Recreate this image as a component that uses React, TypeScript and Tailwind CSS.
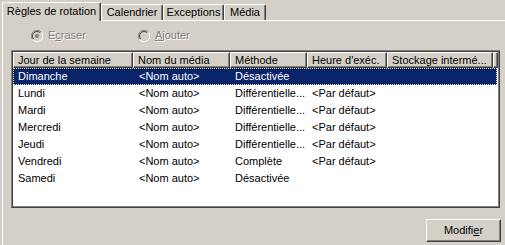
import React from "react";

const rows = [
  ["Dimanche", "<Nom auto>", "Désactivée", ""],
  ["Lundi", "<Nom auto>", "Différentielle...", "<Par défaut>"],
  ["Mardi", "<Nom auto>", "Différentielle...", "<Par défaut>"],
  ["Mercredi", "<Nom auto>", "Différentielle...", "<Par défaut>"],
  ["Jeudi", "<Nom auto>", "Différentielle...", "<Par défaut>"],
  ["Vendredi", "<Nom auto>", "Complète", "<Par défaut>"],
  ["Samedi", "<Nom auto>", "Désactivée", ""],
];

function Radio({ checked }: { checked: boolean }) {
  return (
    <svg width="12" height="12" viewBox="0 0 12 12" className="block">
      <path d="M10.5 2.5 A5.5 5.5 0 0 0 1.5 9.5" fill="none" stroke="#808080" strokeWidth="1" />
      <path d="M1.5 9.5 A5.5 5.5 0 0 0 10.5 2.5" fill="none" stroke="#ffffff" strokeWidth="1" />
      <circle cx="6" cy="6" r="4.5" fill="#d4d0c8" />
      <path d="M9.2 2.8 A4.5 4.5 0 0 0 2.8 9.2" fill="none" stroke="#404040" strokeWidth="1" />
      <path d="M2.8 9.2 A4.5 4.5 0 0 0 9.2 2.8" fill="none" stroke="#d4d0c8" strokeWidth="1" />
      {checked && <circle cx="6" cy="6" r="2" fill="#808080" />}
    </svg>
  );
}

function Tab({ label, w, selected }: { label: string; w: string; selected?: boolean }) {
  return (
    <div
      className={
        selected
          ? "h-[19px] -mb-[1px] relative z-10 bg-[#d4d0c8] border-l border-t border-white border-r border-r-[#404040] shadow-[inset_-1px_0_#808080] rounded-tl-[2px] rounded-tr-[2px] flex items-center justify-center pb-[2px] " + w
          : "h-[16px] bg-[#d4d0c8] border-l border-t border-white border-r border-r-[#404040] shadow-[inset_-1px_0_#808080] rounded-tl-[2px] rounded-tr-[2px] flex items-center justify-center " + w
      }
    >
      <span className="leading-none">{label}</span>
    </div>
  );
}

export default function App() {
  const widths = ["w-[120px]", "w-[97px]", "w-[77px]", "w-[80px]", "w-[106px]"];
  const headers = ["Jour de la semaine", "Nom du média", "Méthode", "Heure d'exéc.", "Stockage intermé..."];
  return (
    <div
      className="w-[505px] h-[245px] bg-[#d4d0c8] overflow-hidden flex flex-col text-[11px] text-black"
      style={{ fontFamily: '"Liberation Sans", Arial, sans-serif' }}
    >
      <div className="h-[20px] flex items-end pl-[2px]">
        <Tab label="Règles de rotation" w="w-[99px]" selected />
        <Tab label="Calendrier" w="w-[62px]" />
        <Tab label="Exceptions" w="w-[61px]" />
        <Tab label="Média" w="w-[42px]" />
      </div>
      <div className="flex-1 ml-[2px] border-t border-l border-white flex flex-col">
        <div className="h-[29px] flex items-center text-[#808080] [text-shadow:1px_1px_0_#ffffff]">
          <div className="ml-[28px] flex items-center">
            <Radio checked />
            <span className="ml-[5px]">
              E<span className="underline">c</span>raser
            </span>
          </div>
          <div className="ml-[52px] flex items-center">
            <Radio checked={false} />
            <span className="ml-[5px]">
              <span className="underline">A</span>jouter
            </span>
          </div>
        </div>
        <div className="ml-[8px] w-[489px] h-[158px] border border-[#808080] border-b-[#404040] border-r-[#404040]">
          <div className="w-full h-full border border-[#404040] border-b-[#808080] border-r-[#808080] bg-white flex flex-col">
            <div className="h-[16px] flex shrink-0">
              {headers.map((h, i) => (
                <div
                  key={i}
                  className={
                    "h-[16px] bg-[#d4d0c8] border-t border-l border-white border-r border-b border-r-[#404040] border-b-[#404040] shadow-[inset_-1px_-1px_#808080] pl-[4px] flex items-center whitespace-nowrap overflow-hidden " +
                    widths[i]
                  }
                >
                  {h}
                </div>
              ))}
              <div className="flex-1 h-[16px] bg-[#d4d0c8] border-t border-l border-white border-r border-b border-r-[#404040] border-b-[#404040] shadow-[inset_-1px_-1px_#808080]" />
            </div>
            {rows.map((r, ri) => (
              <div
                key={ri}
                className={
                  ri === 0
                    ? "h-[17px] flex items-center bg-[#0a246a] text-white border border-dotted border-[#e6e6b4] mr-[1px]"
                    : "h-[17px] flex items-center border border-transparent"
                }
              >
                <div className="w-[120px] pl-[4px] whitespace-nowrap">{r[0]}</div>
                <div className="w-[97px] pl-[5px] whitespace-nowrap">{r[1]}</div>
                <div className="w-[77px] pl-[4px] whitespace-nowrap overflow-hidden">{r[2]}</div>
                <div className="w-[80px] pl-[4px] whitespace-nowrap">{r[3]}</div>
              </div>
            ))}
          </div>
        </div>
        <div className="flex justify-end mt-[11px] mr-[4px]">
          <div className="w-[75px] h-[23px] border border-white border-r-[#404040] border-b-[#404040] shadow-[inset_-1px_-1px_#808080] flex items-center justify-center">
            <span>
              Modifi<span className="underline">e</span>r
            </span>
          </div>
        </div>
      </div>
    </div>
  );
}
